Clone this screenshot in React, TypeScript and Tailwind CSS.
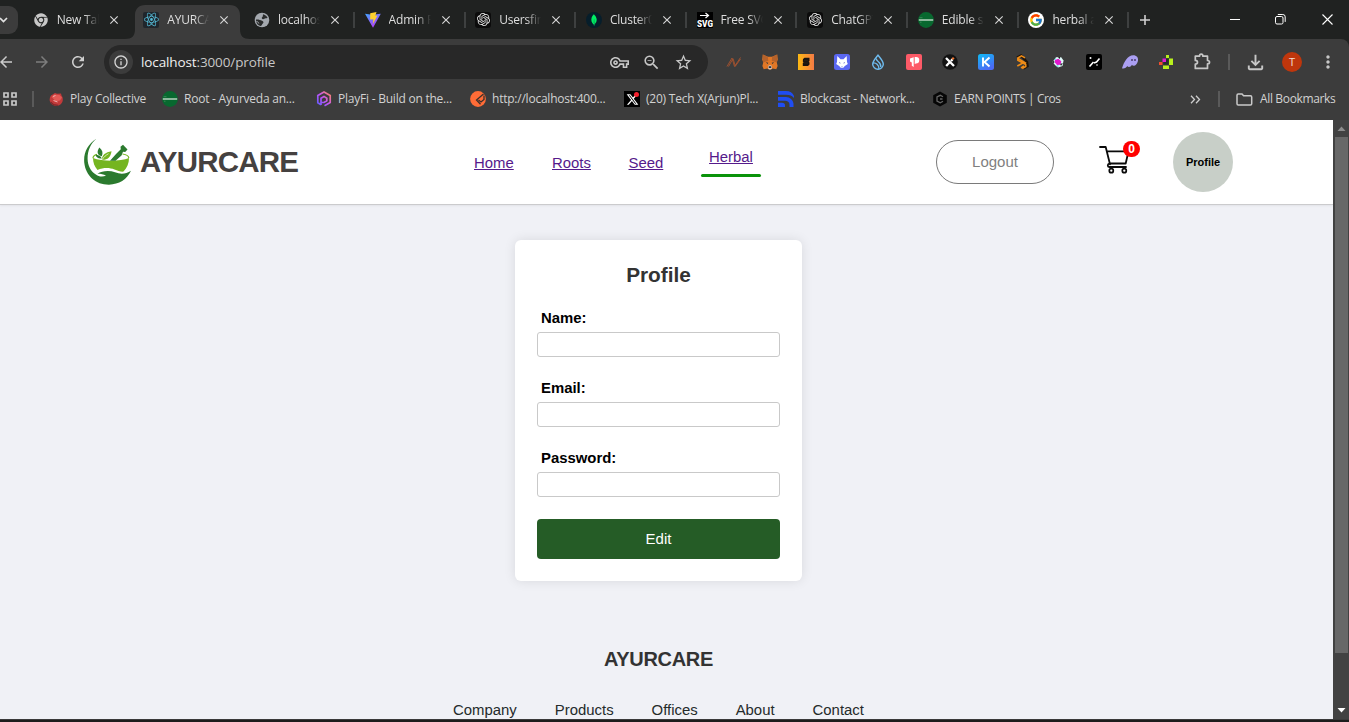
import type { ReactNode } from "react";
import {
  MdArrowBack,
  MdArrowForward,
  MdClose,
  MdInfoOutline,
  MdMoreVert,
  MdOutlineFileDownload,
  MdOutlineVpnKey,
  MdRefresh,
  MdStarBorder,
  MdZoomOut,
} from "react-icons/md";
import { SiMongodb, SiOpenai, SiReact } from "react-icons/si";
import { FaChrome } from "react-icons/fa";
import { FaXTwitter } from "react-icons/fa6";
import { FcGoogle } from "react-icons/fc";

const ViteIcon = () => (
  <svg width="16" height="16" viewBox="0 0 16 16">
    <defs>
      <linearGradient id="vite" x1="0" y1="0" x2="0.6" y2="1">
        <stop offset="0" stopColor="#41a5ff" />
        <stop offset="1" stopColor="#b63cf5" />
      </linearGradient>
    </defs>
    <path d="M0 1.800 7 2.800 15.800 1.800 8 15.800z" fill="url(#vite)" />
    <path d="M5.200 1.200 11.500 0 10.300 3.800 12.500 3.600 7.800 12 8.400 7.200 5.200 7.600z" fill="#ffd02c" />
  </svg>
);

const GlobeIcon = () => (
  <svg width="16" height="16" viewBox="0 0 16 16">
    <circle cx="8" cy="8" r="7.300" fill="#a4a9af" />
    <path d="M9 2.200c1.800.3 3.800 1.600 4.600 3.500-1.500.8-2.600.2-3.200 1.100-1 .8-2.300.6-2.600-.6-.2-1.200.8-1 1-2zM2 7.500c2.500-.2 4.500.5 6 1.300 1.500.5 2 1.700.8 2.600-1 .8-.8 2-2 2.600C4 13.500 2 11 2 7.500z" fill="#2a2c2c" />
    <path d="M2.500 9.500c1.200 0 2 .8 2.300 2" stroke="#a4a9af" fill="none" />
  </svg>
);

const GreenBadge = () => (
  <svg width="16" height="16" viewBox="0 0 16 16">
    <circle cx="8" cy="8" r="7.900" fill="#08682f" />
    <path d="M.8 8h14.400" stroke="#b7d2c1" strokeWidth="1.500" />
    <path d="M1.500 5.700h3M2 10.200h1.500" stroke="#4f9068" strokeWidth=".7" />
  </svg>
);

const OpenAiTile = () => (
  <span className="flex size-4 items-center justify-center rounded-[3px] bg-[#0b0b0b] text-[#e8e8e8]">
    <SiOpenai size={13} />
  </span>
);

const SvgTile = () => (
  <svg width="16" height="16" viewBox="0 0 16 16">
    <path d="M0 0h16v16H0z" fill="#000" />
    <path d="M3 3.500h8M8.500 1l3 2.500-3 2.500" fill="none" stroke="#fff" strokeWidth="1.200" />
    <text x="0" y="14.500" fontSize="9" fontWeight="900" fill="#fff" textLength="16" lengthAdjust="spacingAndGlyphs" fontFamily="Roboto, sans-serif">
      SVG
    </text>
  </svg>
);

interface TabInfo {
  title: string;
  icon: ReactNode;
  active?: boolean;
  divider?: boolean;
}

const tabs: TabInfo[] = [
  { title: "New Tab", icon: <FaChrome size={14} color="#c8c8c8" /> },
  {
    title: "AYURCARE",
    active: true,
    icon: (
      <span className="flex size-4 items-center justify-center rounded-[2px] bg-[#20262c] text-[#55bcd8]">
        <SiReact size={15} />
      </span>
    ),
  },
  { title: "localhost", icon: <GlobeIcon /> },
  { title: "Admin Panel", icon: <ViteIcon />, divider: true },
  { title: "Usersfind", icon: <OpenAiTile />, divider: true },
  {
    title: "Cluster0",
    divider: true,
    icon: (
      <span className="flex size-4 items-center justify-center rounded-full bg-[#061e2b] text-[#00ed64]">
        <SiMongodb size={12} />
      </span>
    ),
  },
  { title: "Free SVG", icon: <SvgTile />, divider: true },
  { title: "ChatGPT", icon: <OpenAiTile />, divider: true },
  { title: "Edible s", icon: <GreenBadge />, divider: true },
  {
    title: "herbal a",
    divider: true,
    icon: (
      <span className="flex size-4 items-center justify-center rounded-full bg-white">
        <FcGoogle size={14} />
      </span>
    ),
  },
];

function Tab({ tab }: { tab: TabInfo }) {
  return (
    <div className="relative flex h-[39px] w-[110.650px] shrink-0 items-center">
      {tab.active && (
        <svg className="absolute top-[5px] left-[-7px]" width="125" height="34" viewBox="0 0 125 34">
          <path d="M0 34C7 34 10 31 10 24V10C10 4 14 0 20 0H105C111 0 115 4 115 10V24C115 31 118 34 125 34Z" fill="#3c3c3c" />
        </svg>
      )}
      <span className={tab.divider ? "h-4 w-[2px] bg-[#3e4040]" : "h-4 w-[2px]"} />
      <span className="relative ml-[9.700px] flex w-4 justify-center">{tab.icon}</span>
      <span className="relative ml-2 w-[42px] overflow-hidden text-[12px] tracking-[-0.2px] whitespace-nowrap text-[#dedede] [mask-image:linear-gradient(to_right,#000_65%,transparent_100%)]">
        {tab.title}
      </span>
      <MdClose className="relative ml-[8px]" size={14} color="#d6d6d6" />
    </div>
  );
}

function TabStrip() {
  return (
    <div className="flex h-[39px] items-center bg-[#202221]">
      <div className="flex h-[28px] w-[18px] items-center rounded-r-[9px] bg-[#3c3c3c]">
        <svg width="9" height="8" viewBox="0 0 9 8">
          <path d="M0 2 3.500 5.500 7 2" fill="none" stroke="#e2e2e2" strokeWidth="1.700" />
        </svg>
      </div>
      <div className="ml-[3px] flex">
        {tabs.map((tab) => (
          <Tab key={tab.title} tab={tab} />
        ))}
      </div>
      <span className="h-4 w-[2px] bg-[#3e4040]" />
      <svg className="ml-[10px]" width="12" height="12" viewBox="0 0 12 12">
        <path d="M6 1v10M1 6h10" stroke="#d0d0d0" strokeWidth="1.600" />
      </svg>
      <div className="ml-auto flex items-center text-white">
        <svg className="mr-[35px]" width="10" height="10" viewBox="0 0 10 10">
          <path d="M0 4.500h10" stroke="#fff" />
        </svg>
        <svg className="mr-[36px]" width="11" height="11" viewBox="0 0 11 11">
          <rect x=".5" y="2.500" width="7.500" height="7.500" rx="1.500" fill="none" stroke="#fff" />
          <path d="M2.800.5h5a2.400 2.400 0 0 1 2.400 2.400v5" fill="none" stroke="#fff" />
        </svg>
        <svg className="mr-[16px]" width="11" height="11" viewBox="0 0 11 11">
          <path d="m.5.5 10 10m0-10-10 10" stroke="#fff" strokeWidth="1.100" />
        </svg>
      </div>
    </div>
  );
}

const extensions: ReactNode[] = [
  <svg width="16" height="16" viewBox="0 0 16 16">
    <path d="M1 12.500 6 4l2.500 8.500L14.500 3.500M2.500 12.500 6.500 5.500M7 4.500l2.500 8M9.500 12l5-7" fill="none" stroke="#a5522f" strokeWidth=".9" />
  </svg>,
  <svg width="16" height="16" viewBox="0 0 16 16">
    <path d="m.8.5 5 2.300h4.400l5-2.300.6 5-1 3 .8 3.500-1.300 3.300-3.600-.8-1.500.9H6.800l-1.500-.9-3.600.8L.4 12l.8-3.500-1-3z" fill="#e17726" />
    <path d="m.8.5 5 2.300.5 4L1 8.500zM15.200.5l-5 2.300-.5 4L15 8.500z" fill="#b5622b" />
    <path d="m6.300 12 .7-.7h2l.7.7.3 2.500-1.500 1h-1l-1.500-1z" fill="#d5bfb2" />
    <path d="m3.800 8.200 2.400.6-.5 1.200zM12.200 8.200l-2.400.6.5 1.200zM6.800 12.300h2.400v1.700H6.800z" fill="#24303c" />
  </svg>,
  <svg width="16" height="16" viewBox="0 0 16 16">
    <defs>
      <linearGradient id="amber">
        <stop stopColor="#fdb913" />
        <stop offset="1" stopColor="#f47b45" />
      </linearGradient>
    </defs>
    <path d="M0 0h16v16H0z" fill="url(#amber)" />
    <path d="m5 5 1.500-1.200h5V7l-.8.700.8.800v2L10 12H4.800V9l.8-.8-.8-.8z" fill="#181410" />
    <path d="M6 6.700h4M6 9h4" stroke="#4a3614" strokeWidth=".4" />
  </svg>,
  <svg width="16" height="16" viewBox="0 0 16 16">
    <rect width="16" height="16" rx="2.500" fill="#5a67f2" />
    <path d="m3.300 2 3.200 3.300h3L12.700 2l.3 6 .8 2-3 2-1.500 1.800H6.700L5.200 12l-3-2L3 8z" fill="#fff" />
    <path d="m5 8 2 1.200H5.500zM11 8 9 9.200h1.500zM7.300 12h1.400l-.7.8z" fill="#3a43b5" />
  </svg>,
  <svg width="16" height="16" viewBox="0 0 16 16">
    <path d="M8 1.200C10 4 13.300 7 13.300 10.200A5.200 5.200 0 0 1 8 15.200a5.200 5.200 0 0 1-5.300-5C2.700 7 6 4 8 1.200z" fill="none" stroke="#6fbcf0" strokeWidth="1.400" />
    <path d="M6.300 4.500C6.200 8 11.500 8 10.800 13M3 9c3-.5 6 2 6 6" fill="none" stroke="#6fbcf0" strokeWidth="1.300" />
  </svg>,
  <svg width="16" height="16" viewBox="0 0 16 16">
    <rect width="16" height="16" rx="2" fill="#fd5a67" />
    <path d="M7.700 3.200V13L5.800 11.800V8.500L4 7.500V4.500zM8.700 3H10a3 3 0 0 1 0 6.500l-1.300.5z" fill="#fff" />
  </svg>,
  <svg width="16" height="16" viewBox="0 0 16 16">
    <circle cx="8" cy="8" r="7.800" fill="#121212" />
    <path d="m4 4 8 8M4.200 12l3-3.200M9 7l1.500-1.600" stroke="#fff" strokeWidth="2.300" />
    <path d="m10.300 5.300 1.500-1.500" stroke="#ee7430" strokeWidth="2.200" />
  </svg>,
  <svg width="16" height="16" viewBox="0 0 16 16">
    <defs>
      <linearGradient id="kblue" x1="0" y1="0" x2=".5" y2="1">
        <stop stopColor="#0ebcf5" />
        <stop offset="1" stopColor="#4b6bf5" />
      </linearGradient>
    </defs>
    <rect width="16" height="16" rx="2.500" fill="url(#kblue)" />
    <path d="M5 3.500v9M11.500 3.500 6.500 8l5 4.500" fill="none" stroke="#fff" strokeWidth="1.900" />
  </svg>,
  <svg width="16" height="16" viewBox="0 0 16 16">
    <path d="m3 3.500 4-2 6 6.500.5 4-4 2.500" fill="none" stroke="#20150b" strokeWidth="2.500" />
    <path d="M11 3.800 7.500 1.800 3.800 4v2.200l8 4.500v1.800L8.200 14.500M4 4.300l8.200 5M3.300 12 8 9.500M7 13.800l3-1.800" fill="none" stroke="#ef8c16" strokeWidth="1.500" />
  </svg>,
  <svg width="16" height="16" viewBox="0 0 16 16">
    <path d="M2.500 8 6 3.200 11 3l2.500 3.500L12.500 12 8 13.500l-2.500-2z" fill="#dffafa" />
    <path d="m4.800 6 3.500-1.200 3 2.500-.8 3.400-3.500.3-2-2.600z" fill="#e118cd" />
    <path d="M2.800 6.500v3l2-1.500zM8 3h2.500l-1 2zM12.800 9l-1.800 3-.8-2z" fill="#222" />
    <path d="M5.500 4.500 4.500 6M6.500 12h2" stroke="#39c9cf" strokeWidth="1" />
  </svg>,
  <svg width="16" height="16" viewBox="0 0 16 16">
    <rect width="16" height="16" rx="2" fill="#000" />
    <path d="m3.500 12.500 4-4.500M8 9l2.500-1 3-3.500" fill="none" stroke="#fff" strokeWidth="1.600" />
    <circle cx="4.500" cy="4" r="1" fill="#fff" />
    <circle cx="11" cy="11" r=".8" fill="#fff" />
  </svg>,
  <svg width="18" height="16" viewBox="0 0 18 16">
    <path d="M1 14.200C3 8 6.500 1.200 12.200 1.200c3.500 0 5.200 2.500 4.800 5.200-.4 3-2.500 5.300-4.500 5.300-1.200 0-1.500-1-1.500-1-1 1.500-2 2.300-3.200 2.200-1 0-1.300-.8-1.300-.8C5.500 13.500 2.500 15.500 1 14.200z" fill="#ab9ff2" />
    <path d="M11 5v2M14 5v2" stroke="#3c315b" strokeWidth="1.300" />
  </svg>,
  <svg width="16" height="16" viewBox="0 0 16 16">
    <path d="M8 1h3v3H8zM11 4.500h4v6.500h-4zM5 11.500h6v3.500H5z" fill="#b8f01d" />
    <path d="M4.500 4.500H8V8H4.500z" fill="#e01bd6" />
    <path d="M1 8h3.500v3H1z" fill="#f24e2d" />
    <path d="M8 5h2.500v5.500H5.500V8H8z" fill="#26302a" />
  </svg>,
  <svg width="20" height="20" viewBox="0 0 20 20">
    <path d="M3.300 4.200h4.200c0-2.800 3.400-2.800 3.400 0h4.600v4.300c2.700 0 2.700 3.300 0 3.300v4.600H3.300v-4.200c2.900 0 2.900-3.800 0-3.800z" fill="none" stroke="#c7c7c7" strokeWidth="1.700" strokeLinejoin="round" />
  </svg>,
];

function Toolbar() {
  return (
    <div className="flex h-[46px] items-center rounded-tr-[8px] bg-[#3c3c3c]">
      <div className="flex w-[104px] items-center">
        <MdArrowBack className="ml-[-3px]" size={18} color="#cbcbcb" />
        <MdArrowForward className="ml-[18px]" size={18} color="#7d7d7d" />
        <MdRefresh className="ml-[18px]" size={18} color="#d0d0d0" />
      </div>
      <div className="flex h-[34px] w-[604px] items-center rounded-full bg-[#282828] pl-[5px]">
        <span className="flex size-6 items-center justify-center rounded-full bg-[#3c3c3c]">
          <MdInfoOutline size={16} color="#d5d5d5" />
        </span>
        <span className="ml-[8px] w-[462px] text-[13.500px] tracking-[-0.12px] whitespace-nowrap text-[#c7c7c7]">
          <span className="text-[#f0f0f0]">localhost</span>:3000/profile
        </span>
        <MdOutlineVpnKey className="ml-[7px]" size={19} color="#c7c7c7" />
        <MdZoomOut className="ml-[13px]" size={19} color="#c7c7c7" />
        <MdStarBorder className="ml-[13px]" size={19} color="#c7c7c7" />
      </div>
      <div className="ml-[8px] flex">
        {extensions.map((icon, i) => (
          <span key={i} className="flex w-9 items-center justify-center">
            {icon}
          </span>
        ))}
      </div>
      <span className="ml-[8px] h-4 w-[2px] bg-[#5a5a5a]" />
      <MdOutlineFileDownload className="ml-[14px]" size={23} color="#c7c7c7" />
      <span className="ml-[15px] flex size-5 items-center justify-center rounded-full bg-[#bf360c] text-[11px] text-[#f4dcd4]">T</span>
      <MdMoreVert className="ml-[16px]" size={20} color="#c7c7c7" />
    </div>
  );
}

interface Bookmark {
  title: string;
  width: string;
  icon: ReactNode;
}

const bookmarks: Bookmark[] = [
  {
    title: "Play Collective",
    width: "w-[114px]",
    icon: (
      <svg width="15" height="15" viewBox="0 0 15 15">
        <path d="M2 3.500 6 1l2 .8 4-.3.5 2c2 2.500 1.800 6.500-.8 8.700C9 14.500 5 14.300 2.500 12 0 9.500.3 6 2 3.500z" fill="#c23a3a" />
        <path d="m2.500 5 3-2.500 5 .5 2.500 2.500-2 3-4 1z" fill="#e25a56" />
        <path d="m4 4.500 2.500-1M4.500 8.500l4 1.500" stroke="#f3b0ac" />
        <path d="m1.500 10 3 2.700 4.500.6" stroke="#7c2a2d" fill="none" strokeWidth="1.300" />
      </svg>
    ),
  },
  { title: "Root - Ayurveda an...", width: "w-[154px]", icon: <GreenBadge /> },
  {
    title: "PlayFi - Build on the...",
    width: "w-[154px]",
    icon: (
      <svg width="16" height="16" viewBox="0 0 16 16">
        <defs>
          <linearGradient id="playfi" x1="0" y1="1" x2="1" y2="0">
            <stop stopColor="#5d5cff" />
            <stop offset=".5" stopColor="#c354f5" />
            <stop offset="1" stopColor="#ff8a5c" />
          </linearGradient>
        </defs>
        <path d="M5 13.800 1.800 11.800V4.500L8 1l6.200 3.500v7L8.500 14.800M5 14V7.200L8 5.400l2.800 1.800v2.600L8 11.500H5" fill="none" stroke="url(#playfi)" strokeWidth="1.700" />
      </svg>
    ),
  },
  {
    title: "http://localhost:400...",
    width: "w-[154px]",
    icon: (
      <svg width="16" height="16" viewBox="0 0 16 16">
        <circle cx="8" cy="8" r="7.900" fill="#ff6c37" />
        <path d="M13.500 3 6.500 9l4 4.300M8.500 9l2.500 2 3-2.500V4.500" fill="none" stroke="#3a302c" strokeWidth="1.300" />
      </svg>
    ),
  },
  {
    title: "(20) Tech X(Arjun)Pl...",
    width: "w-[154px]",
    icon: (
      <span className="relative flex size-4 items-center justify-center bg-black text-white">
        <FaXTwitter size={13} />
        <span className="absolute top-[1px] right-[1px] size-[5px] rounded-full bg-[#f4212e]" />
      </span>
    ),
  },
  {
    title: "Blockcast - Network...",
    width: "w-[154px]",
    icon: (
      <svg width="16" height="16" viewBox="0 0 16 16">
        <path d="M0 0h8c4 0 6.500 1.800 8 5v2C14 4.500 12 3.800 8 3.800H0zM0 6h8c4 0 7 3 7.500 6.500V16h-4v-2.500C11.500 11 9.500 9.800 7 9.800H0zM0 11.800h4c2 0 3 1 3 2.700V16H0z" fill="#1f4df2" />
      </svg>
    ),
  },
  {
    title: "EARN POINTS | Cros",
    width: "w-[180px]",
    icon: (
      <svg width="16" height="16" viewBox="0 0 16 16">
        <path d="m8 .5 6.800 3.800v7.400L8 15.500l-6.800-3.800V4.300z" fill="#060606" />
        <path d="M11 5.800 8.300 4.300 5 6v4l3.300 1.800L11 10.200M10.500 8H8" fill="none" stroke="#666" strokeWidth="1.300" />
      </svg>
    ),
  },
];

function BookmarkBar() {
  return (
    <div className="flex h-[35px] items-center bg-[#3c3c3c] pb-[7px] text-[12px] text-[#d2d2d2]">
      <svg className="ml-[2px]" width="16" height="16" viewBox="0 0 16 16">
        <path d="M2 2h4v4H2zM10 2h4v4h-4zM2 10h4v4H2zM10 10h4v4h-4z" fill="none" stroke="#c9c9c9" strokeWidth="1.700" />
      </svg>
      <span className="ml-[14px] h-4 w-[2px] bg-[#5a5a5a]" />
      <div className="ml-[14px] flex">
        {bookmarks.map((b) => (
          <div key={b.title} className={"flex shrink-0 items-center " + b.width}>
            <span className="flex w-4 shrink-0 justify-center">{b.icon}</span>
            <span className={"ml-[6px] whitespace-nowrap " + (b.title.startsWith("EARN") ? "tracking-[-0.42px]" : "tracking-[-0.23px]")}>{b.title}</span>
          </div>
        ))}
      </div>
      <div className="ml-auto flex items-center">
        <svg width="11" height="9" viewBox="0 0 11 9">
          <path d="m1 .8 3.500 3.700L1 8.200M6 .8l3.500 3.700L6 8.200" fill="none" stroke="#cfcfcf" strokeWidth="1.300" />
        </svg>
        <span className="ml-[17px] h-4 w-[2px] bg-[#5a5a5a]" />
        <svg className="ml-[16px]" width="17" height="13" viewBox="0 0 17 13">
          <path d="M1 2.200Q1 1 2.200 1H6l1.600 1.800h6.900q1.200 0 1.200 1.200v6.800q0 1.200-1.200 1.200H2.200Q1 12 1 10.800z" fill="none" stroke="#c9c9c9" strokeWidth="1.500" />
        </svg>
        <span className="ml-[7px] w-[89px] tracking-[-0.35px] whitespace-nowrap">All Bookmarks</span>
      </div>
    </div>
  );
}

const Logo = () => (
  <svg width="48" height="48" viewBox="0 0 48 48">
    <path d="M12.300.8C3.500 6.500-.8 15 .3 25 1.800 38 12 46.800 25 46.700c10-.2 18-5.200 22-13.900-5 3.300-10.500 3.600-16 1.500-5.500-2-13-1.600-17.500 1.500 3.500 0 6 .5 8.500 2-4 1.500-7.500.8-10.500-1.500C6.500 33 3.800 27.500 3.600 21 3.500 12.500 6.500 6 12.300.8z" fill="#2b7a2e" />
    <path d="M9 20c0 4.500 1.500 8.500 4.500 12 6-2.500 12-2.500 17-.4 3.300 1.300 6 2.200 9 2 3.700-3.700 5.500-8.500 5.500-13.500-9 3.600-27 3.600-36-.1z" fill="#75b520" />
    <path d="M9 20.200c0-2 1.700-3.200 4-3.800M38.500 16c4 .7 6.300 2.300 6.300 4" fill="none" stroke="#75b520" strokeWidth="1.200" />
    <path d="M26 22.700 32.500 15.500 36.800 11.300l-.3-2.500L39 6.800l4.500 4.700-2.300 2.500-2.200-.3-1.500 3.800-6 5.200z" fill="#2b7a2e" />
    <path d="M15.300 9.500c3.200 2.500 4 5.300 2.500 8.800-4.300-.8-5.500-4.300-2.500-8.800z" fill="#2b7a2e" />
    <path d="M11.500 16.800c3 0 5.200 1.200 6.300 3.700-3.200.5-5.400-.7-6.300-3.700z" fill="#2b7a2e" />
    <path d="M27.500 13.200c-.7 6-4.300 9-9.700 8.600 0-4.700 3.800-7.700 9.700-8.600z" fill="#75b520" />
    <path d="M18 21.700c2-3 4-4.500 6.500-6" stroke="#fff" strokeWidth=".7" fill="none" />
  </svg>
);

const Cart = () => (
  <svg width="34" height="30" viewBox="0 0 34 30">
    <path d="M1 2h5.700L11 19.300M8 6.300h21.500L26.700 18.500H10.800M10.300 18.500c-2 .6-2 3.500 0 3.500H27" fill="none" stroke="#0a0a0a" strokeWidth="1.800" strokeLinejoin="round" strokeLinecap="round" />
    <circle cx="12.300" cy="25.700" r="2" fill="none" stroke="#0a0a0a" strokeWidth="1.700" />
    <circle cx="25.300" cy="25.700" r="2" fill="none" stroke="#0a0a0a" strokeWidth="1.700" />
  </svg>
);

function Header() {
  return (
    <header className="flex h-[85px] shrink-0 items-center border-b border-[#cbcbcd] bg-white shadow-[0_1px_2px_rgba(0,0,0,0.06)]">
      <div className="ml-[84px] flex w-[390px] items-center">
        <Logo />
        <span className="ml-[8px] text-[29.500px] leading-none font-bold tracking-[-0.8px] text-[#454140]">AYURCARE</span>
      </div>
      <nav className="flex items-center text-[14.900px] text-[#551a8b]">
        <a href="#home" className="w-[78px] pt-[2px] underline">Home</a>
        <a href="#roots" className="w-[76.500px] pt-[2px] underline">Roots</a>
        <a href="#seed" className="w-[72.500px] pt-[2px] underline">Seed</a>
        <div className="flex w-[60px] flex-col items-center gap-[6px] pb-px">
          <a href="#herbal" className="underline">Herbal</a>
          <span className="h-[3px] w-full rounded-full bg-[#0b930b]" />
        </div>
      </nav>
      <button className="ml-[175px] h-[44px] w-[118px] rounded-full border border-[#7a7a7a] pt-px text-[15px] text-[#7f7f7f]">Logout</button>
      <div className="relative ml-[45px] flex w-[34px] pb-[5px]">
        <Cart />
        <span className="absolute top-[-4px] left-[24px] flex h-4 w-[17px] items-center justify-center rounded-full bg-[#ff0000] text-[12px] font-bold text-white">0</span>
      </div>
      <button className="ml-[40px] size-[60px] rounded-full bg-[#c8cfc8] text-[11px] font-bold text-black">Profile</button>
    </header>
  );
}

function Field({ label }: { label: string }) {
  return (
    <label className="block h-[50px]">
      <span className="block h-[25px] pl-[4px] text-[14.900px] leading-[23px] font-bold text-black">{label}</span>
      <input className="block h-[25px] w-full rounded-[3px] border border-[#c9c9c9] bg-white px-2 text-sm" />
    </label>
  );
}

function ProfileCard() {
  return (
    <section className="mt-[35px] h-[341px] w-[287px] rounded-[6px] bg-white px-[22px] pt-[22px] shadow-[0_0_12px_rgba(0,0,0,0.1)]">
      <h2 className="mb-[19px] h-[26px] text-center text-[20.800px] leading-[26px] font-bold text-[#333]">Profile</h2>
      <div className="flex flex-col gap-5">
        <Field label="Name:" />
        <Field label="Email:" />
        <Field label="Password:" />
      </div>
      <button className="mt-[22px] h-[40px] w-full rounded-[4px] bg-[#255c26] text-[15px] text-white">Edit</button>
    </section>
  );
}

function ScrollBar() {
  return (
    <div className="flex w-4 flex-col items-center bg-[#424242]">
      <svg width="16" height="17" viewBox="0 0 16 17">
        <path d="M4.500 11h8L8.500 6.500z" fill="#8c8c8c" />
      </svg>
      <div className="ml-px h-[516px] w-[13px] bg-[#686868]" />
      <svg className="mt-auto" width="16" height="17" viewBox="0 0 16 17">
        <path d="M4.500 6h8l-4 4.500z" fill="#fff" />
      </svg>
    </div>
  );
}

export default function App() {
  return (
    <div className="flex h-[722px] w-[1349px] flex-col overflow-hidden bg-[#202221] font-['Liberation_Sans',Arial,sans-serif]">
      <div className="font-['Open_Sans','Noto_Sans',sans-serif]">
        <TabStrip />
        <Toolbar />
        <BookmarkBar />
      </div>
      <div className="flex h-[599px]">
        <main className="flex w-[1333px] flex-col overflow-hidden bg-[#f0f1f6]">
          <Header />
          <div className="flex w-[1317px] flex-col items-center">
            <ProfileCard />
            <h3 className="mt-[66px] text-[20px] leading-[24px] font-bold tracking-[-0.3px] text-[#333]">AYURCARE</h3>
            <ul className="mt-[29px] flex gap-[38px] text-[14.900px] leading-[20px] text-[#252b2b]">
              <li>Company</li>
              <li>Products</li>
              <li>Offices</li>
              <li>About</li>
              <li>Contact</li>
            </ul>
          </div>
        </main>
        <ScrollBar />
      </div>
      <div className="h-[3px] border-t border-[#3a3a3a] bg-[#1c1c1c]" />
    </div>
  );
}
